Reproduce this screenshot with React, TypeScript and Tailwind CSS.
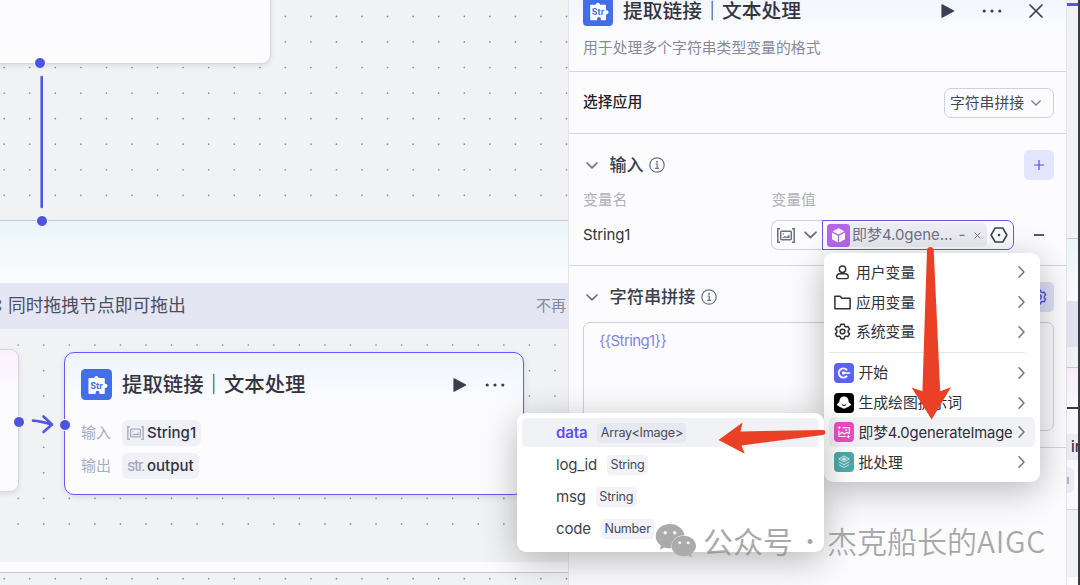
import React from "react";

interface IconProps {
  className?: string;
}

const GRID_STEP = 25.56;

interface DotGridProps {
  startX: number;
  startY: number;
  cols: number;
  rows: number;
}

const DotGrid: React.FC<DotGridProps> = ({ startX, startY, cols, rows }) => (
  <svg className="absolute inset-0 w-full h-full" aria-hidden="true">
    {Array.from({ length: rows * cols }, (_, i) => (
      <circle
        key={i}
        cx={startX + (i % cols) * GRID_STEP}
        cy={startY + Math.floor(i / cols) * GRID_STEP}
        r="0.85"
        fill="#8b8d92"
      />
    ))}
  </svg>
);

const StrIcon: React.FC<IconProps> = ({ className = "" }) => (
  <svg viewBox="0 0 30 30" className={`shrink-0 ${className}`}>
    <rect width="30" height="30" rx="4" fill="#426fe8" />
    <path
      fill="#fff"
      d="M8 8.800h4.800v-.6a2.200 2.200 0 0 1 4.200 0v.6h5.200a.8.8 0 0 1 .8.8v4.600h.5a2 2 0 0 1 0 4.200H23v5a.8.8 0 0 1-.8.8h-4.300v-1.200a1.900 1.900 0 0 0-3.800 0v1.200H8a.8.8 0 0 1-.8-.8V9.600a.8.8 0 0 1 .8-.8Z"
    />
    <text
      x="15"
      y="18.900"
      textAnchor="middle"
      fontSize="8.600"
      fontWeight="700"
      fill="#426fe8"
    >
      Str
    </text>
  </svg>
);

const PlayIcon: React.FC<IconProps> = ({ className = "" }) => (
  <svg viewBox="0 0 14 14" className={className}>
    <path
      d="M1 .8 12.700 7 1 13.200Z"
      fill="#3b3f51"
      stroke="#3b3f51"
      strokeWidth="1.200"
      strokeLinejoin="round"
    />
  </svg>
);

const MoreIcon: React.FC<IconProps> = ({ className = "" }) => (
  <svg viewBox="0 0 20 4" className={className} fill="#3b3f51">
    <circle cx="2.200" cy="2" r="1.600" />
    <circle cx="10" cy="2" r="1.600" />
    <circle cx="17.800" cy="2" r="1.600" />
  </svg>
);

// Image inside square brackets, marks an image-typed variable
const ImageTypeIcon: React.FC<IconProps> = ({ className = "" }) => (
  <svg
    viewBox="0 0 18 15"
    className={className}
    fill="none"
    stroke="currentColor"
    strokeWidth="1.500"
  >
    <path d="M3 .8H.8v13.400H3M15 .8h2.200v13.400H15" />
    <rect x="3.700" y="3.300" width="10.600" height="8.400" rx="1" />
    <circle cx="6.300" cy="6" r=".4" strokeWidth=".8" />
    <path d="m5.500 9.700 2.200-1.500 1.800.8L12.300 7v2.700Z" fill="currentColor" strokeWidth=".4" />
  </svg>
);

const InfoIcon: React.FC<IconProps> = ({ className = "" }) => (
  <svg
    viewBox="0 0 16 16"
    className={className}
    fill="none"
    stroke="#6b7083"
    strokeWidth="1.200"
  >
    <circle cx="8" cy="8" r="7.200" />
    <path d="M6.500 7h1.700v4.300M6.200 11.300h3.800" />
    <circle cx="8" cy="4.700" r=".4" fill="#6b7083" />
  </svg>
);

const Chevron: React.FC<IconProps> = ({ className = "" }) => (
  <svg viewBox="0 0 12 7" className={className} fill="none" stroke="currentColor">
    <path
      d="m1 1 5 4.800L11 1"
      strokeWidth="1.700"
      strokeLinecap="round"
      strokeLinejoin="round"
    />
  </svg>
);

const ChevronEnd: React.FC = () => (
  <svg viewBox="0 0 7 12" className="w-[7px] h-3 shrink-0" fill="none" stroke="#6b7083">
    <path d="m1 .8 5 5.200-5 5.200" strokeWidth="1.400" strokeLinecap="round" strokeLinejoin="round" />
  </svg>
);

const GearIcon: React.FC<IconProps> = ({ className = "" }) => (
  <svg
    viewBox="0 0 18 18"
    className={className}
    fill="none"
    stroke="currentColor"
    strokeWidth="1.600"
    strokeLinejoin="round"
  >
    <path d="M7.300 1.300h3.400l.6 2 1.300.8 2.100-.5 1.800 3-1.500 1.500v1.800l1.500 1.500-1.800 3-2.100-.5-1.300.8-.6 2H7.300l-.6-2-1.300-.8-2.100.5-1.800-3L3 9.900V8.100L1.500 6.600l1.800-3 2.100.5 1.300-.8Z" />
    <circle cx="9" cy="9" r="2.500" />
  </svg>
);

const UserIcon: React.FC<IconProps> = ({ className = "" }) => (
  <svg viewBox="0 0 16 16" className={className} fill="none" stroke="currentColor" strokeWidth="1.500">
    <circle cx="8" cy="4.500" r="3.400" />
    <path d="M5.300 9.300h5.400a3.500 3.500 0 0 1 3.500 3.500c0 1.200-.7 1.700-1.700 1.700h-9c-1 0-1.700-.5-1.700-1.700a3.500 3.500 0 0 1 3.500-3.500Z" />
  </svg>
);

const FolderIcon: React.FC<IconProps> = ({ className = "" }) => (
  <svg
    viewBox="0 0 17 15"
    className={className}
    fill="none"
    stroke="currentColor"
    strokeWidth="1.500"
    strokeLinejoin="round"
  >
    <path d="M.9 1.200h5.300l1.800 2h8.100v10.600H.9Z" />
  </svg>
);

const StartIcon: React.FC = () => (
  <svg viewBox="0 0 20 20" className="w-5 h-5 shrink-0">
    <rect width="20" height="20" rx="4" fill="#5b62f6" />
    <path
      d="M12.600 6.700a4.600 4.600 0 1 0 0 6.600"
      fill="none"
      stroke="#fff"
      strokeWidth="1.900"
      strokeLinecap="round"
    />
    <circle cx="9.500" cy="10" r="1.700" fill="#fff" />
    <path d="M9.500 10h6.200" stroke="#fff" strokeWidth="1.600" strokeLinecap="round" />
  </svg>
);

const GhostIcon: React.FC = () => (
  <svg viewBox="0 0 20 20" className="w-5 h-5 shrink-0">
    <rect width="20" height="20" rx="4" fill="#000" />
    <path
      d="M10 3.600c2.700 0 4.500 1.900 4.600 4.400.1 1.300.8 2 1.800 2.600 1.200.8.500 2.500-1.200 2.500-.6 1.200-1.600 1.300-2.400 1.100-.9 1.700-4.700 1.700-5.600 0-.8.2-1.800.1-2.400-1.100-1.700 0-2.400-1.700-1.200-2.500 1-.6 1.700-1.300 1.800-2.600.1-2.500 1.900-4.400 4.600-4.400Z"
      fill="#fff"
    />
    <path d="M8 11.500c1 1.400 3 1.400 4 0" fill="none" stroke="#000" strokeWidth="1" strokeLinecap="round" />
  </svg>
);

const PictureIcon: React.FC = () => (
  <svg viewBox="0 0 20 20" className="w-5 h-5 shrink-0">
    <rect width="20" height="20" rx="4" fill="#ea4cc3" />
    <g fill="none" stroke="#fff" strokeWidth="1.200" strokeLinejoin="round">
      <path d="M8.500 5.700h6.900v5.800M4.900 8.500v6h6.800" />
      <path d="m5 12.800 3-2.500 2.400 1.600 2.200-1.500 2.600.9" />
    </g>
    <circle cx="12" cy="8.100" r=".9" fill="#fff" />
    <path d="m5.200 3.800.6 1.300 1.300.5-1.300.6-.6 1.300-.5-1.300-1.300-.6 1.300-.5ZM14.400 12.400l.6 1.600 1.600.6-1.600.6-.6 1.600-.6-1.600-1.600-.6 1.600-.6Z" fill="#fff" />
  </svg>
);

const LayersIcon: React.FC = () => (
  <svg viewBox="0 0 20 20" className="w-5 h-5 shrink-0">
    <rect width="20" height="20" rx="4" fill="#4caaa8" />
    <g fill="none" stroke="#dff5f3" strokeWidth="0.900" strokeLinejoin="round">
      <path d="m10 4 5.200 2.900L10 9.800 4.800 6.900Z" />
      <path d="m4.800 9.800 5.200 2.900 5.200-2.900" />
      <path d="m4.800 12.600 5.200 2.900 5.200-2.900" />
    </g>
    <path d="m10 5.400 2.800 1.500L10 8.400 7.200 6.900Z" fill="#dff5f3" />
  </svg>
);

const CubeIcon: React.FC = () => (
  <svg viewBox="0 0 23 23" className="w-[23px] h-[23px] shrink-0">
    <rect width="23" height="23" rx="3.500" fill="#b566ee" />
    <g fill="#fff">
      <path d="m11.500 4.200 5.900 3.100-5.900 3.200-5.900-3.200Z" />
      <path d="m5 8.500 5.900 3.200v6.700L5 15.200Z" />
      <path d="m18 8.500-5.900 3.200v6.700l5.900-3.200Z" />
    </g>
  </svg>
);

const HexagonIcon: React.FC = () => (
  <svg viewBox="0 0 18 16" className="w-[18px] h-4 shrink-0">
    <path
      d="M5.200 1h7.600L16.900 8l-4.100 7H5.200L1.100 8Z"
      fill="none"
      stroke="#3b3f51"
      strokeWidth="1.500"
      strokeLinejoin="round"
    />
    <circle cx="9" cy="8" r="1.300" fill="#3b3f51" />
  </svg>
);

const Handle: React.FC<{ className: string }> = ({ className }) => (
  <span
    className={`absolute w-3 h-3 rounded-full bg-[#4e53df] border border-white ${className}`}
  />
);

const NodeTitle: React.FC<IconProps> = ({ className = "" }) => (
  <span
    className={`ml-2.5 font-medium text-[#33343d] leading-none whitespace-nowrap ${className}`}
  >
    提取链接<span className="font-bold">｜</span>文本处理
  </span>
);

const StringNode: React.FC = () => (
  <div className="absolute left-[64px] top-[352px] w-[460px] h-[143px] rounded-[10px] border-[1.500px] border-[#635bf5] bg-[linear-gradient(#eef4fe,#fcfcff_52px)] shadow-[0_2px_6px_rgba(40,40,80,0.12)] pl-4 pt-4">
    <div className="flex items-center h-[31px] pr-[18px]">
      <StrIcon className="w-[31px] h-[31px]" />
      <NodeTitle className="pt-0.5 text-[20.400px]" />
      <PlayIcon className="w-3.5 h-3.5 ml-auto mr-[18px]" />
      <MoreIcon className="w-5 h-1" />
    </div>
    <div className="flex items-center mt-5 h-[26px] text-[15px]">
      <span className="w-[41px] text-[#a9adbd]">输入</span>
      <span className="flex items-center gap-[3px] h-[26px] px-[5px] rounded-md bg-[#f0f0f7] text-[#31333f] font-medium">
        <ImageTypeIcon className="w-[17px] h-[14px] text-[#a9adbd]" />
        String1
      </span>
    </div>
    <div className="flex items-center mt-[7px] h-[26px] text-[15px]">
      <span className="w-[41px] text-[#a9adbd]">输出</span>
      <span className="flex items-center gap-[3px] h-[26px] px-[5px] rounded-md bg-[#f0f0f7] text-[#31333f] font-medium">
        <span className="w-[17px] text-[16px] font-normal text-[#a0a4b8] font-['Roboto'] tracking-[-1.200px]">
          str.
        </span>
        output
      </span>
    </div>
  </div>
);

const Canvas: React.FC = () => (
  <div className="absolute inset-y-0 left-0 w-[569px] overflow-hidden bg-[#f1f2f4]">
    <DotGrid startX={4.2} startY={16.4} cols={23} rows={23} />
    <div className="absolute -left-4 -top-4 w-[287px] h-20 rounded-[9px] border border-[#d5d7e2] bg-[#fcfcfe] shadow-[0_2px_5px_rgba(40,40,80,0.10)]" />

    <div className="absolute left-0 right-0 top-[220px] h-[353px] flex flex-col border-y border-[#c6c8d5] bg-[#fcfcfe]">
      <div className="h-[62px] bg-[linear-gradient(#eaf6f9,#fcfcfe)]" />
      <div className="flex items-center h-[46px] justify-between bg-[#e4e6f3] whitespace-nowrap">
        <div className="flex items-center text-[17.800px] text-[#4b4e5f]">
          <span className="w-[3px] mr-[5px] flex justify-end overflow-hidden text-[15px] font-['DejaVu_Sans',sans-serif]">
            ⌘
          </span>
          同时拖拽节点即可拖出
        </div>
        <span className="pr-[3px] text-[15px] text-[#85889b]">不再</span>
      </div>
      <div className="relative h-[233px] bg-[#f1f2f4]">
        <DotGrid startX={18.2} startY={16} cols={22} rows={8} />
      </div>
    </div>

    <div className="absolute -left-5 top-[349px] w-[39px] h-[143px] rounded-[9px] border border-[#d5d7e2] bg-[linear-gradient(#fbf1fe,#fcfcfe_52px)] shadow-[0_2px_5px_rgba(40,40,80,0.10)]" />
    <StringNode />

    <svg className="absolute inset-0 w-full h-full" fill="none" stroke="#5257df" strokeWidth="2.600" strokeLinecap="round">
      <path d="M41.700 77v130" />
      <path d="M33 420.600c7 .3 12 1.800 18.500 4M43.500 416.500l8.500 8-8.500 7.500" strokeLinejoin="round" />
    </svg>
    <Handle className="left-[34.400px] top-[57.300px]" />
    <Handle className="left-[35.800px] top-[215.300px]" />
    <Handle className="left-[13.300px] top-[416px]" />
    <Handle className="left-[59.300px] top-[419px]" />
  </div>
);

const SidePanel: React.FC = () => (
  <section className="absolute left-[568px] inset-y-0 w-[499px] border-x border-[#e3e4ee] bg-[#fcfcfe]">
    <header className="h-[71.500px] px-3.5 border-b border-[#d5d5e3] bg-[linear-gradient(#f2f6fe,#fcfcfe_36px)]">
      <div className="flex items-center h-[22px]">
        <StrIcon className="w-[30px] h-[30px]" />
        <NodeTitle className="pt-0.5 text-[19.800px]" />
        <PlayIcon className="w-3.5 h-3.5 ml-auto" />
        <MoreIcon className="w-5 h-1 ml-[27px]" />
        <svg viewBox="0 0 14 14" className="w-3.5 h-3.5 ml-[27px] mr-[9px]">
          <path d="m1 1 12 12M13 1 1 13" stroke="#3b3f51" strokeWidth="1.700" strokeLinecap="round" />
        </svg>
      </div>
      <p className="mt-[15px] text-[14.850px] leading-[22px] text-[#85899b]">
        用于处理多个字符串类型变量的格式
      </p>
    </header>

    <div className="flex items-center justify-between h-[62.500px] pl-3.5 pr-3 border-b border-[#d5d5e3]">
      <span className="pb-px text-[14.800px] font-medium text-[#1f2129]">选择应用</span>
      <button className="flex items-center justify-between w-[110px] h-[30px] mt-px pl-[5px] pr-3 rounded-[7px] border border-[#cfd0df] text-[14.800px] text-[#45485a]">
        <span className="pt-px">字符串拼接</span>
        <Chevron className="w-2.5 h-1.5 text-[#7c8092]" />
      </button>
    </div>

    <div className="h-[132px] pl-3.5 pr-3 pt-4 border-b border-[#d5d5e3]">
      <div className="flex items-center h-[30px]">
        <Chevron className="w-3 h-[7px] ml-[3px] text-[#6b7083]" />
        <span className="ml-[11.500px] pt-px text-[17px] font-medium text-[#3b3e4c]">输入</span>
        <InfoIcon className="w-4 h-4 ml-[5.500px]" />
        <button className="ml-auto flex items-center justify-center w-[30px] h-[30px] rounded-[5px] bg-[#e4e6ff]">
          <svg viewBox="0 0 12 12" className="w-3 h-3">
            <path d="M1 6h10M6 1v10" stroke="#5450f0" strokeWidth="1.200" />
          </svg>
        </button>
      </div>
      <div className="grid grid-cols-[188.500px_1fr] mt-[9px] text-[14.800px] leading-[22px] text-[#aeb0ba]">
        <span>变量名</span>
        <span>变量值</span>
      </div>
      <div className="flex items-center h-[30px] mt-[9px]">
        <span className="w-[188px] text-[15px] tracking-[-0.150px] text-[#33343d]">String1</span>
        <div className="flex items-center w-[51px] h-[30px] pl-[5px] rounded-l-[7px] border border-r-0 border-[#cfd0df]">
          <ImageTypeIcon className="w-[18px] h-[15px] text-[#6b7083]" />
          <Chevron className="w-[13px] h-2 ml-[9px] text-[#6b7083]" />
        </div>
        <div className="flex items-center w-[192px] h-[30px] pl-1 rounded-r-[7px] border-[1.500px] border-[#625cf2]">
          <div className="flex items-center w-40 h-6 rounded-[5px] bg-[#ececf3]">
            <CubeIcon />
            <span className="ml-0.5 text-[15px] tracking-[-0.050px] text-[#6f7284] whitespace-nowrap">
              即梦4.0gene...
            </span>
            <span className="ml-1.5 text-[15px] text-[#6f7284]">-</span>
            <svg viewBox="0 0 8 8" className="w-[7px] h-[7px] ml-auto mr-1.5">
              <path d="m.7.7 6.600 6.600M7.300.7.700 7.300" stroke="#6f7284" strokeWidth="1.100" />
            </svg>
          </div>
          <span className="ml-[3px]">
            <HexagonIcon />
          </span>
        </div>
        <span className="ml-5 w-2.5 h-[1.500px] bg-[#565a6b]" />
      </div>
    </div>

    <div className="h-[182px] pl-3.5 pr-3 pt-4 border-b border-[#d5d5e3]">
      <div className="flex items-center h-[30px]">
        <Chevron className="w-3 h-[7px] ml-[3px] text-[#6b7083]" />
        <span className="ml-[11.500px] text-[17.200px] font-medium text-[#3b3e4c]">字符串拼接</span>
        <InfoIcon className="w-4 h-4 ml-1.5" />
        <button className="ml-auto flex items-center justify-center w-[30px] h-[30px] rounded-[5px] bg-[#dddff8] text-[#5450f0]">
          <GearIcon className="w-4 h-4" />
        </button>
      </div>
      <div className="mt-2.5 h-[109px] pl-[15px] pt-[7px] rounded-[7px] border border-[#cfd0df] text-[15px] tracking-[-0.600px] leading-[22px] text-[#7f87dc]">
        {"{{String1}}"}
      </div>
    </div>
  </section>
);

// Sliver of the canvas that stays visible to the right of the panel
const CanvasEdge: React.FC = () => (
  <div className="absolute left-[1067px] inset-y-0 w-[13px] flex flex-col overflow-hidden bg-[#f1f2f4] border-r-2 border-[#3a3b40]">
    <div className="h-[239px] pt-[3px] border-b border-[#c6c8d5]">
      <div className="h-[3px] bg-[#5257df]" />
    </div>
    <div className="h-[62px] bg-[linear-gradient(#eaf6f9,#fcfcfe)]" />
    <div className="h-[46px] bg-[#e1e3f1]" />
    <div className="h-[21px] border-b border-[#c6c8d5]" />
    <div className="h-[142px] border-b border-[#d0d2de] bg-[linear-gradient(#f9effc,#fafafd_42px)]">
      <div className="h-[39px]" />
      <div className="h-[2px] bg-[#3b3d45]" />
      <div className="flex items-center h-[26px] mt-[25px] pl-1 bg-[#ededf5] text-[15px] font-medium text-[#31333f]">
        in
      </div>
      <div className="flex items-center w-[7px] h-[26px] mt-[7px] rounded-r-md bg-[#ededf5]">
        <span className="w-0.5 h-[7px] bg-[#b0b3c2]" />
      </div>
    </div>
    <div className="h-[67px]" />
    <div className="h-2 bg-[#fcfcfe]" />
  </div>
);

interface MenuEntry {
  label: string;
  icon: React.ReactNode;
  active?: boolean;
}

const scopeEntries: MenuEntry[] = [
  { label: "用户变量", icon: <UserIcon className="w-[15px] h-[15px]" /> },
  { label: "应用变量", icon: <FolderIcon className="w-[17px] h-[15px]" /> },
  { label: "系统变量", icon: <GearIcon className="w-[17px] h-[17px]" /> },
];

const nodeEntries: MenuEntry[] = [
  { label: "开始", icon: <StartIcon /> },
  { label: "生成绘图提示词", icon: <GhostIcon /> },
  { label: "即梦4.0generateImage", icon: <PictureIcon />, active: true },
  { label: "批处理", icon: <LayersIcon /> },
];

const VariableMenu: React.FC = () => (
  <div className="absolute left-[824px] top-[253px] w-[216px] h-[229px] px-[5px] pt-[4.500px] rounded-[9px] bg-white shadow-[0_8px_36px_rgba(0,0,0,0.28)] text-[14.800px] text-[#2f3038] whitespace-nowrap">
    {scopeEntries.map((entry) => (
      <div key={entry.label} className="flex items-center h-[29.800px] pl-[5px] pr-2.5">
        <span className="flex justify-center w-[17px] mr-[5px]">{entry.icon}</span>
        <span className="flex-1 pt-px">{entry.label}</span>
        <ChevronEnd />
      </div>
    ))}
    <div className="h-px mt-[5px] mb-[5px] mr-2.5 bg-[#e6e6ea]" />
    {nodeEntries.map((entry) => (
      <div
        key={entry.label}
        className={`flex items-center h-[29.800px] pl-[4.500px] pr-2.5 rounded-[5px] ${
          entry.active ? "bg-[#f1f2f6]" : ""
        }`}
      >
        {entry.icon}
        <span className={`flex-1 ml-[5px] pt-px ${entry.active ? "tracking-[-0.170px]" : ""}`}>
          {entry.label}
        </span>
        <ChevronEnd />
      </div>
    ))}
  </div>
);

const fields = [
  { name: "data", type: "Array<Image>", active: true },
  { name: "log_id", type: "String", active: false },
  { name: "msg", type: "String", active: false },
  { name: "code", type: "Number", active: false },
];

const FieldMenu: React.FC = () => (
  <div className="absolute left-[516.500px] top-[413px] w-[307px] h-[138.500px] flex flex-col gap-[3px] px-[5px] pt-[5px] rounded-[9px] bg-white shadow-[0_8px_36px_rgba(0,0,0,0.28)]">
    {fields.map((field) => (
      <div
        key={field.name}
        className={`flex items-center h-[29.200px] pl-[34.500px] rounded-[5px] ${
          field.active ? "bg-[#f1f2f6]" : ""
        }`}
      >
        <span
          className={`pt-px text-[15px] tracking-[-0.150px] ${
            field.active ? "font-semibold text-[#5b51f2]" : "text-[#3d3f4a]"
          }`}
        >
          {field.name}
        </span>
        <span
          className={`flex items-center h-5 ml-2.5 px-[3.500px] pt-px rounded-[4px] text-[12.600px] tracking-[-0.250px] text-[#474a59] ${
            field.active ? "bg-[#e7e9f1]" : "bg-[#f2f3f8]"
          }`}
        >
          {field.type}
        </span>
      </div>
    ))}
  </div>
);

const Arrows: React.FC = () => (
  <svg className="absolute inset-0 w-full h-full pointer-events-none" fill="#ea4026">
    <path d="M927 250c0-4 6.600-4 6.700 0L940.200 391.200 951 387.300 931.700 419.500 911.600 387.600 922.400 391.200Z" />
    <path d="M823 430c3.300-.2 3.300 4.800 0 5L741.500 445.500 744.800 453.700 718.500 440 742.600 422.600 740.500 431.500Z" />
  </svg>
);

const Watermark: React.FC = () => (
  <div className="absolute left-[655px] top-[519px] flex items-center h-11 text-[#8c8c8c]/75 whitespace-nowrap">
    <svg viewBox="0 0 42 34" className="w-[42px] h-[34px]">
      <path
        fill="#ababab"
        d="M15 0C6.800 0 .7 5.500.7 12.300c0 3.900 2 7.200 5.300 9.500l-1.300 4 4.700-2.400c1.800.6 3.600.9 5.800.9h1.500C15 16.600 22 10.900 29.500 11.200 28.300 4.700 22.200 0 15 0Z"
      />
      <path
        fill="#ababab"
        d="M41 22c0-5.700-5.500-10.200-12.200-10.200S16.600 16.300 16.600 22s5.500 10.200 12.200 10.200c1.500 0 3-.3 4.400-.7l4 2.100-1.100-3.400C39 28.300 41 25.300 41 22Z"
      />
      <g fill="#f5f5f5">
        <circle cx="10.200" cy="8.700" r="1.800" />
        <circle cx="19.700" cy="8.700" r="1.800" />
        <circle cx="24.700" cy="18.700" r="1.500" />
        <circle cx="33.200" cy="18.700" r="1.500" />
      </g>
    </svg>
    <span className="ml-1.5 pb-[3px] text-[30px] leading-[40px] font-normal font-['Noto_Sans_CJK_SC',sans-serif]">
      公众号
    </span>
    <span className="w-[34px] pb-[3px] text-center text-[26px] leading-[40px] font-light font-['Noto_Sans_CJK_SC',sans-serif]">
      ·
    </span>
    <span className="pb-[3px] text-[30px] leading-[40px] font-[350] font-['Noto_Sans_CJK_SC',sans-serif]">
      杰克船长的
      <span className="tracking-[0.700px]">AIGC</span>
    </span>
  </div>
);

const App: React.FC = () => (
  <main className="relative w-[1080px] h-[585px] overflow-hidden bg-[#f1f2f4] font-['Inter','Noto_Sans_CJK_SC',sans-serif]">
    <Canvas />
    <SidePanel />
    <CanvasEdge />
    <VariableMenu />
    <FieldMenu />
    <Watermark />
    <Arrows />
  </main>
);

export default App;
